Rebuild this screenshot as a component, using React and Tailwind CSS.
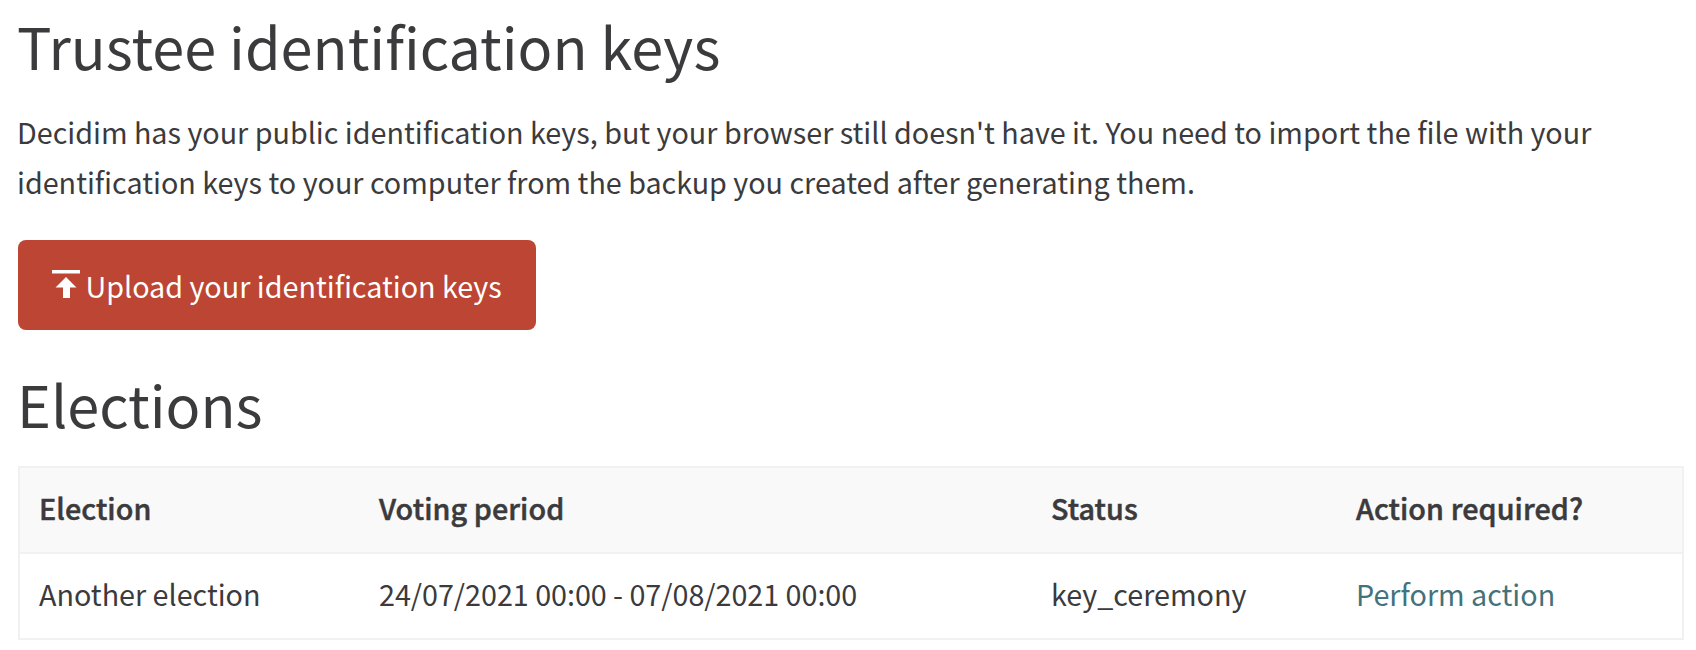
const cols = ['Election', 'Voting period', 'Status', 'Action required?'];
export default function App() {
  return (
    <main className="h-[650px] overflow-hidden bg-white pt-[4px] pr-[12px] pl-[18px] font-['Noto_Sans_CJK_SC',sans-serif] text-[28.72px] text-[#3b3a3c]">
      <h1 className="-ml-px h-[82px] whitespace-nowrap text-[57.6px] leading-[82px]">Trustee identification keys</h1>
      <p className="-ml-px mt-[21px] whitespace-nowrap leading-[50px]">
        Decidim has your public identification keys, but your browser still doesn't have it. You need to import the file with your<br />
        identification keys to your computer from the backup you created after generating them.
      </p>
      <button className="mt-[33px] flex h-[90px] w-[518px] items-center rounded-[8px] bg-[#bc4533] pl-[34px] whitespace-nowrap text-white">
        <svg viewBox="0 0 28 28" className="mr-[5.5px] mb-[2px] size-7" fill="currentColor"><path d="M0 0h28v3.5H0zM14 7l10.5 10.5H18V28h-7V17.5H3.5z" /></svg>
        <span className="pt-[2px]">Upload your identification keys</span>
      </button>
      <h2 className="mt-[32px] -ml-px h-[82px] text-[57.6px] leading-[82px]">Elections</h2>
      <table className="mt-[22px] w-[1666px] table-fixed border-collapse border-2 border-[#f1f1f1] text-left">
        <colgroup><col className="w-[340px]" /><col className="w-[673px]" /><col className="w-[305px]" /><col /></colgroup>
        <thead><tr className="h-[86px] border-b-2 border-[#f1f1f1] bg-[#f9f9f9]">{cols.map((c) => <th key={c} className="pb-[5px] pl-[19px] nth-2:pl-5 font-medium tracking-[0.08px] [-webkit-text-stroke:0.5px_#3b3a3c]">{c}</th>)}</tr></thead>
        <tbody><tr className="h-[86px]">
          <td className="pb-[5px] pl-[19px]">Another election</td><td className="pb-[5px] pl-5 tracking-[-0.03px]">24/07/2021 00:00 - 07/08/2021 00:00</td><td className="pb-[5px] pl-[19px]">key_ceremony</td><td className="pb-[5px] pl-[19px] text-[#44727c]">Perform action</td>
        </tr></tbody>
      </table>
    </main>
  );
}
